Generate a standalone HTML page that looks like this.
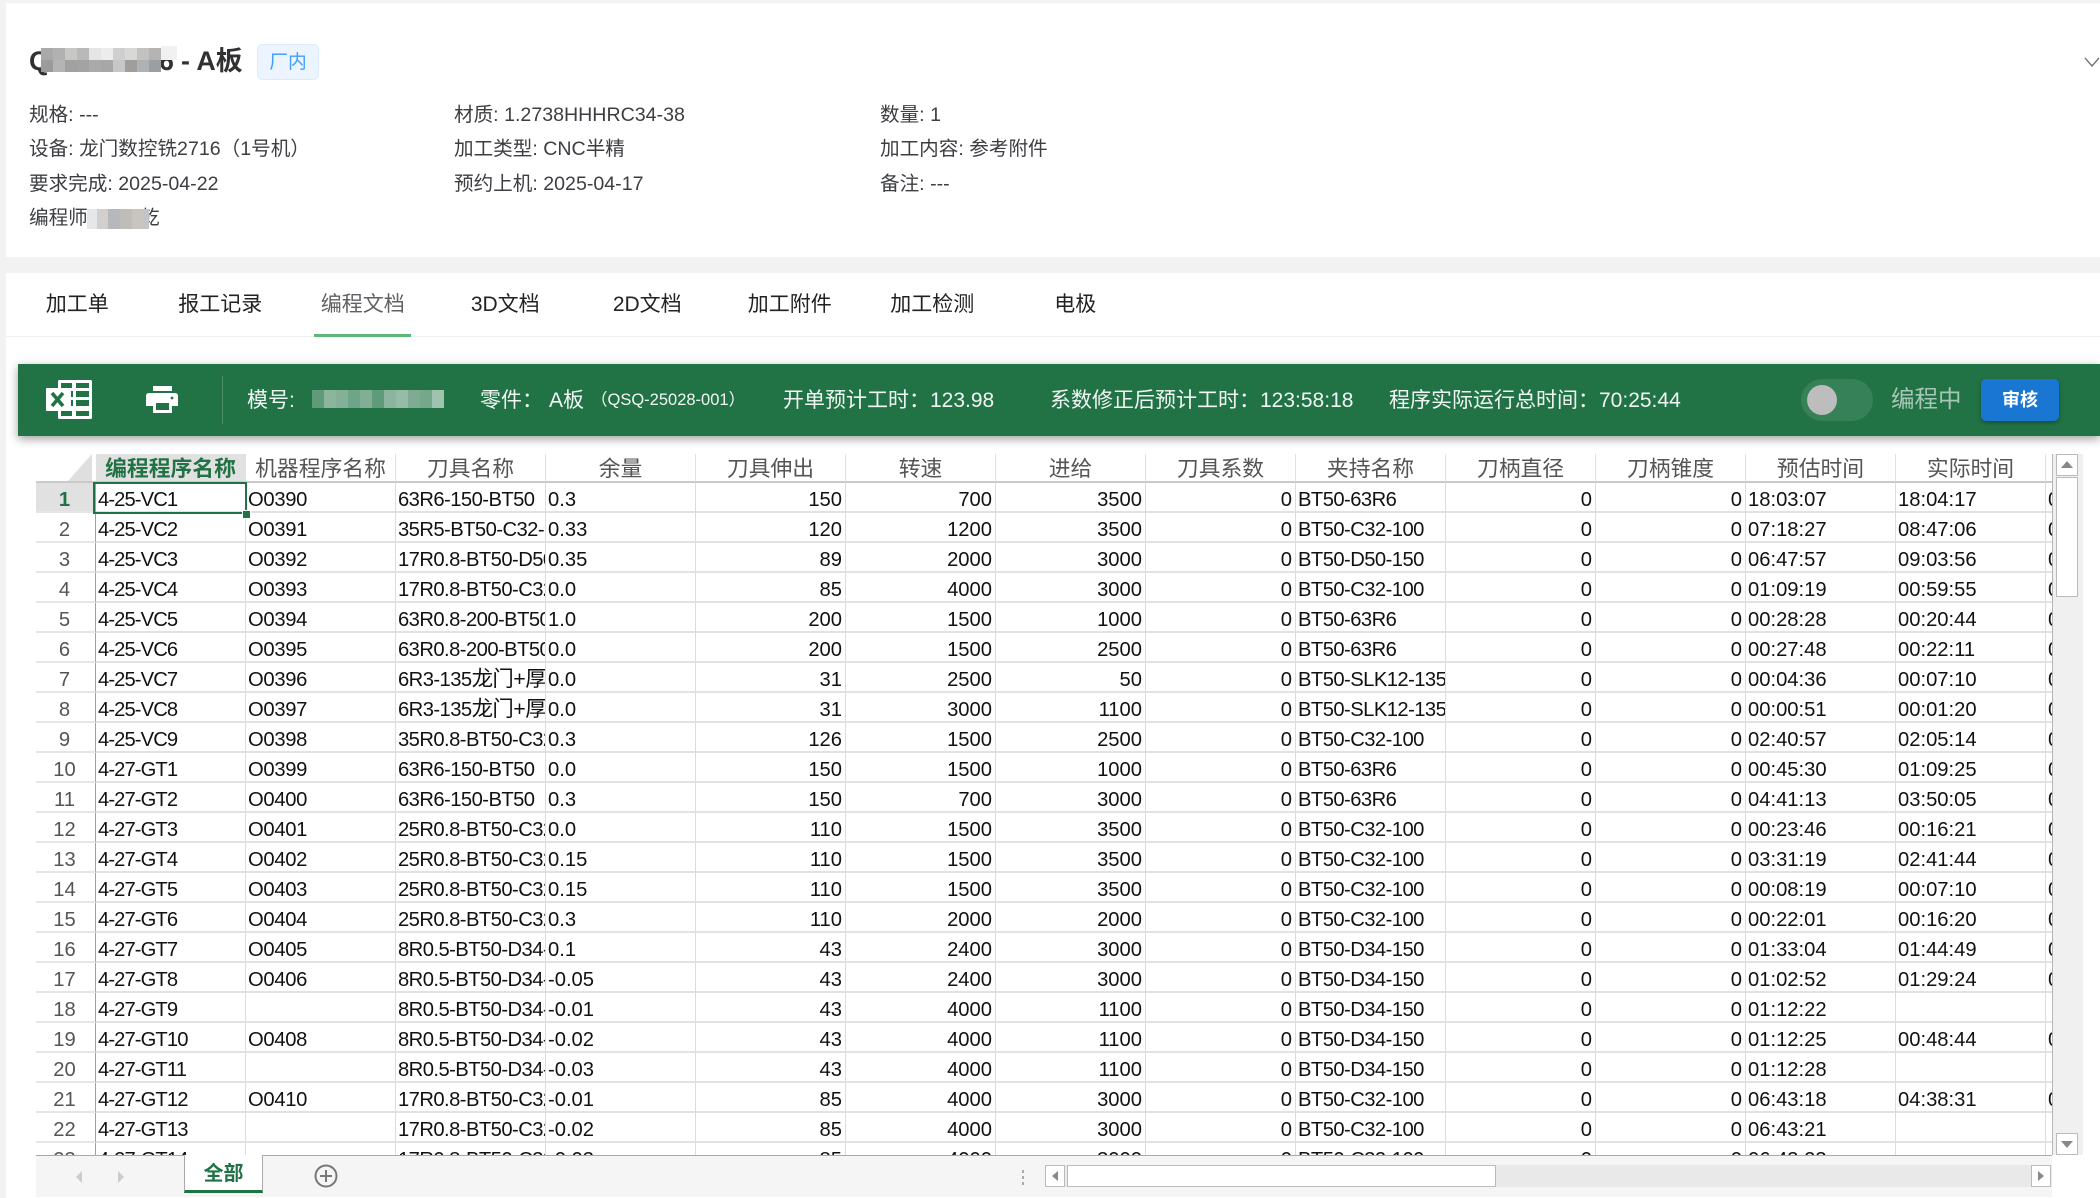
<!DOCTYPE html>
<html lang="zh-CN">
<head>
<meta charset="utf-8">
<title>编程文档</title>
<style>
*{box-sizing:border-box}
html,body{margin:0;padding:0;width:2100px;height:1198px;overflow:hidden;background:#f2f2f2;font-family:"Liberation Sans","Noto Sans CJK SC",sans-serif;color:#303133}
.a{position:absolute;white-space:nowrap;line-height:1}
.card{position:absolute;background:#fff}
.i{font-size:19.6px;color:#3c3e42}
.tab{position:absolute;top:294px;width:142.5px;text-align:center;font-size:21px;line-height:22px;color:#222}
.g{color:#f2f6f4;font-size:21px}
.tiles{position:absolute;display:flex;flex-wrap:wrap}
.tiles i{display:block;width:12px;height:12px}
#grid{position:absolute;left:36px;top:454px;width:2016px;height:701px;overflow:hidden;background:#fff}
table{border-collapse:separate;border-spacing:0;table-layout:fixed;width:2160px;font-size:20.2px;color:#111}
col{width:150px}
col.r{width:60px}
td,th{height:30px;padding:7px 3px 0 2px;line-height:21px;white-space:nowrap;overflow:hidden;border-right:1px solid #dcdcdc;border-bottom:2px solid #e2e2e2;font-weight:400;text-align:left}
th{height:29px;padding:2px 0 0;line-height:25px;text-align:center;font-size:21.8px;color:#555;border-right:1px solid #dde3de;border-bottom:2px solid #c9c9c9}
th.on{background:#e1e1e1;color:#217346;font-weight:700}
td.h{text-align:center;color:#555;padding:7px 2px 0 0;border-right:1px solid #a0a0a0;border-bottom:2px solid #e6e6e6}
td.h.on{background:#e1e1e1;color:#217346;font-weight:700}
td.n{text-align:right}
td.t1{letter-spacing:-.9px}
td.t2{letter-spacing:-.3px}
td.t3,td.t9{letter-spacing:-.55px}
td b{font-weight:400;font-size:21.4px;line-height:0}
#sheet{position:absolute;left:36px;top:1155px;width:2016px;height:42px;background:#f5f5f5;border-top:1.5px solid #aaa}
.sb{position:absolute;background:#fff;border:1px solid #bbb}
</style>
</head>
<body>

<!-- top strip and cards -->
<div class="card" style="left:6px;top:3px;width:2094px;height:254px"></div>
<div class="card" style="left:6px;top:273px;width:2094px;height:925px"></div>

<!-- title -->
<div class="a" style="left:29px;top:48px;font-size:26.8px;font-weight:700">Q</div>
<div class="a" style="left:159px;top:48px;font-size:26.8px;font-weight:700">6</div>
<div class="a" style="left:161px;top:46px;width:16px;height:14px;background:#f1f1f1"></div>
<div class="tiles" style="left:41px;top:48px;width:120px">
<i style="background:#a9a9a9"></i><i style="background:#b1b1af"></i><i style="background:#c8c8c6"></i><i style="background:#b9b9b9"></i><i style="background:#e4e5e6"></i><i style="background:#ececec"></i><i style="background:#cfcfcf"></i><i style="background:#d8d8d6"></i><i style="background:#c2c2c0"></i><i style="background:#b6b4b2"></i>
<i style="background:#9b9b9b"></i><i style="background:#b4b4b4"></i><i style="background:#a1a1a1"></i><i style="background:#a3a3a3"></i><i style="background:#a8aaae"></i><i style="background:#a7a7a7"></i><i style="background:#c6c8c8"></i><i style="background:#a09e9c"></i><i style="background:#aeb2b4"></i><i style="background:#9c9ea0"></i>
</div>
<div class="a" style="left:181px;top:48px;font-size:26.8px;font-weight:700">- A板</div>
<div class="a" style="left:257px;top:44px;width:62px;height:36px;line-height:34px;text-align:center;background:#ecf5ff;border:1px solid #d9ecff;border-radius:5px;color:#409eff;font-size:18.75px">厂内</div>

<!-- chevron -->
<svg class="a" style="left:2084px;top:56px" width="16" height="12" viewBox="0 0 16 12"><path d="M1 2 L8 10 L15 2" fill="none" stroke="#777" stroke-width="1.4"/></svg>

<!-- info -->
<div class="a i" style="left:29px;top:106px">规格: ---</div>
<div class="a i" style="left:454px;top:106px">材质: 1.2738HHHRC34-38</div>
<div class="a i" style="left:880px;top:106px">数量: 1</div>
<div class="a i" style="left:29px;top:140px">设备: 龙门数控铣2716（1号机）</div>
<div class="a i" style="left:454px;top:140px">加工类型: CNC半精</div>
<div class="a i" style="left:880px;top:140px">加工内容: 参考附件</div>
<div class="a i" style="left:29px;top:175px">要求完成: 2025-04-22</div>
<div class="a i" style="left:454px;top:175px">预约上机: 2025-04-17</div>
<div class="a i" style="left:880px;top:175px">备注: ---</div>
<div class="a i" style="left:29px;top:209px">编程师</div>
<div class="a i" style="left:140px;top:209px">乾</div>
<div class="tiles" style="left:87px;top:209px;width:62px;height:20px;display:flex">
<i style="width:10px;height:20px;background:#e6e7ea"></i><i style="width:11px;height:20px;background:#d2cfcc"></i><i style="width:12px;height:20px;background:#b6b8bc"></i><i style="width:12px;height:20px;background:#c0bdb9"></i><i style="width:12px;height:20px;background:#c8c4bf"></i><i style="width:5px;height:20px;background:#c2c4c8"></i>
</div>

<!-- tabs -->
<div class="tab" style="left:6px">加工单</div>
<div class="tab" style="left:149px">报工记录</div>
<div class="tab" style="left:291.5px;color:#606266">编程文档</div>
<div class="tab" style="left:434px">3D文档</div>
<div class="tab" style="left:576px">2D文档</div>
<div class="tab" style="left:718.5px">加工附件</div>
<div class="tab" style="left:861px">加工检测</div>
<div class="tab" style="left:1004px">电极</div>
<div class="a" style="left:6px;top:336px;width:2094px;height:1px;background:#f0f0f0"></div>
<div class="a" style="left:314px;top:334px;width:97px;height:3px;background:#5cb87a"></div>

<!-- green bar -->
<div class="a" style="left:18px;top:364px;width:2082px;height:72px;background:#217346;box-shadow:0 3px 9px rgba(0,0,0,.38)"></div>
<svg class="a" style="left:46px;top:380px" width="46" height="39" viewBox="0 0 46 39">
<rect x="12" y="0" width="34" height="39" rx="1.5" fill="#fff"/>
<g fill="#217346">
<rect x="15" y="3" width="11" height="5"/><rect x="30" y="3" width="13" height="5"/>
<rect x="30" y="11" width="13" height="6"/>
<rect x="30" y="20" width="13" height="6"/>
<rect x="15" y="31" width="11" height="5"/><rect x="30" y="31" width="13" height="5"/>
<rect x="25" y="11" width="2" height="6"/><rect x="25" y="20" width="2" height="6"/>
</g>
<rect x="0" y="8" width="24" height="23" rx="1" fill="#fff"/>
<path d="M6 13 L17 26 M17 13 L6 26" stroke="#217346" stroke-width="3.6" fill="none"/>
</svg>
<svg class="a" style="left:146px;top:386px" width="32" height="27" viewBox="0 0 32 27">
<rect x="7" y="0" width="19" height="5" fill="#fff"/>
<path d="M3 7 H29 Q32 7 32 10 V20 H0 V10 Q0 7 3 7 Z" fill="#fff"/>
<circle cx="26" cy="12" r="1.4" fill="#217346"/>
<rect x="7" y="14" width="19" height="13" fill="#fff"/>
<rect x="10" y="17" width="13" height="7" fill="#217346"/>
</svg>
<div class="a" style="left:222px;top:376px;width:1px;height:48px;background:rgba(255,255,255,.2)"></div>
<div class="a g" style="left:247px;top:390px">模号:</div>
<div class="tiles" style="left:312px;top:390px;width:132px;height:18px">
<i style="height:18px;background:#5f9a79"></i><i style="height:18px;background:#8bb59d"></i><i style="height:18px;background:#84b098"></i><i style="height:18px;background:#6ea487"></i><i style="height:18px;background:#82ae96"></i><i style="height:18px;background:#5f9a79"></i><i style="height:18px;background:#8bb59d"></i><i style="height:18px;background:#96bca7"></i><i style="height:18px;background:#7eab92"></i><i style="height:18px;background:#75a78b"></i><i style="height:18px;background:#a0c3af"></i>
</div>
<div class="a g" style="left:480px;top:390px">零件：</div>
<div class="a g" style="left:549px;top:390px">A板</div>
<div class="a" style="left:591px;top:392px;font-size:16.5px;color:#f2f6f4">（QSQ-25028-001）</div>
<div class="a g" style="left:783px;top:390px">开单预计工时：123.98</div>
<div class="a g" style="left:1050px;top:390px">系数修正后预计工时：123:58:18</div>
<div class="a g" style="left:1389px;top:390px">程序实际运行总时间：70:25:44</div>
<div class="a" style="left:1801px;top:379px;width:72px;height:42px;border-radius:21px;background:rgba(255,255,255,.1)"></div>
<div class="a" style="left:1807px;top:385px;width:30px;height:30px;border-radius:50%;background:#bdbdbd"></div>
<div class="a" style="left:1891px;top:388px;font-size:23.5px;color:rgba(255,255,255,.6)">编程中</div>
<div class="a" style="left:1981px;top:379px;width:78px;height:42px;line-height:42px;text-align:center;border-radius:5px;background:#1976d2;color:#fff;font-size:18px;font-weight:700;box-shadow:0 2px 4px rgba(0,0,0,.3)">审核</div>

<!-- grid -->
<div id="grid">
<table>
<colgroup><col class="r"><col><col><col><col><col><col><col><col><col><col><col><col><col><col></colgroup>
<tr><th style="border-right:0"></th><th class="on">编程程序名称</th><th>机器程序名称</th><th>刀具名称</th><th>余量</th><th>刀具伸出</th><th>转速</th><th>进给</th><th>刀具系数</th><th>夹持名称</th><th>刀柄直径</th><th>刀柄锥度</th><th>预估时间</th><th>实际时间</th><th></th></tr>
<tr><td class="h on">1</td><td class="t1">4-25-VC1</td><td class="t2">O0390</td><td class="t3">63R6-150-BT50</td><td>0.3</td><td class="n">150</td><td class="n">700</td><td class="n">3500</td><td class="n">0</td><td class="t9">BT50-63R6</td><td class="n">0</td><td class="n">0</td><td>18:03:07</td><td>18:04:17</td><td>0</td></tr>
<tr><td class="h">2</td><td class="t1">4-25-VC2</td><td class="t2">O0391</td><td class="t3">35R5-BT50-C32-100</td><td>0.33</td><td class="n">120</td><td class="n">1200</td><td class="n">3500</td><td class="n">0</td><td class="t9">BT50-C32-100</td><td class="n">0</td><td class="n">0</td><td>07:18:27</td><td>08:47:06</td><td>0</td></tr>
<tr><td class="h">3</td><td class="t1">4-25-VC3</td><td class="t2">O0392</td><td class="t3">17R0.8-BT50-D50-150</td><td>0.35</td><td class="n">89</td><td class="n">2000</td><td class="n">3000</td><td class="n">0</td><td class="t9">BT50-D50-150</td><td class="n">0</td><td class="n">0</td><td>06:47:57</td><td>09:03:56</td><td>0</td></tr>
<tr><td class="h">4</td><td class="t1">4-25-VC4</td><td class="t2">O0393</td><td class="t3">17R0.8-BT50-C32-100</td><td>0.0</td><td class="n">85</td><td class="n">4000</td><td class="n">3000</td><td class="n">0</td><td class="t9">BT50-C32-100</td><td class="n">0</td><td class="n">0</td><td>01:09:19</td><td>00:59:55</td><td>0</td></tr>
<tr><td class="h">5</td><td class="t1">4-25-VC5</td><td class="t2">O0394</td><td class="t3">63R0.8-200-BT50</td><td>1.0</td><td class="n">200</td><td class="n">1500</td><td class="n">1000</td><td class="n">0</td><td class="t9">BT50-63R6</td><td class="n">0</td><td class="n">0</td><td>00:28:28</td><td>00:20:44</td><td>0</td></tr>
<tr><td class="h">6</td><td class="t1">4-25-VC6</td><td class="t2">O0395</td><td class="t3">63R0.8-200-BT50</td><td>0.0</td><td class="n">200</td><td class="n">1500</td><td class="n">2500</td><td class="n">0</td><td class="t9">BT50-63R6</td><td class="n">0</td><td class="n">0</td><td>00:27:48</td><td>00:22:11</td><td>0</td></tr>
<tr><td class="h">7</td><td class="t1">4-25-VC7</td><td class="t2">O0396</td><td class="t3">6R3-135<b>龙门+厚</b></td><td>0.0</td><td class="n">31</td><td class="n">2500</td><td class="n">50</td><td class="n">0</td><td class="t9">BT50-SLK12-135-1</td><td class="n">0</td><td class="n">0</td><td>00:04:36</td><td>00:07:10</td><td>0</td></tr>
<tr><td class="h">8</td><td class="t1">4-25-VC8</td><td class="t2">O0397</td><td class="t3">6R3-135<b>龙门+厚</b></td><td>0.0</td><td class="n">31</td><td class="n">3000</td><td class="n">1100</td><td class="n">0</td><td class="t9">BT50-SLK12-135-1</td><td class="n">0</td><td class="n">0</td><td>00:00:51</td><td>00:01:20</td><td>0</td></tr>
<tr><td class="h">9</td><td class="t1">4-25-VC9</td><td class="t2">O0398</td><td class="t3">35R0.8-BT50-C32-100</td><td>0.3</td><td class="n">126</td><td class="n">1500</td><td class="n">2500</td><td class="n">0</td><td class="t9">BT50-C32-100</td><td class="n">0</td><td class="n">0</td><td>02:40:57</td><td>02:05:14</td><td>0</td></tr>
<tr><td class="h">10</td><td class="t1">4-27-GT1</td><td class="t2">O0399</td><td class="t3">63R6-150-BT50</td><td>0.0</td><td class="n">150</td><td class="n">1500</td><td class="n">1000</td><td class="n">0</td><td class="t9">BT50-63R6</td><td class="n">0</td><td class="n">0</td><td>00:45:30</td><td>01:09:25</td><td>0</td></tr>
<tr><td class="h">11</td><td class="t1">4-27-GT2</td><td class="t2">O0400</td><td class="t3">63R6-150-BT50</td><td>0.3</td><td class="n">150</td><td class="n">700</td><td class="n">3000</td><td class="n">0</td><td class="t9">BT50-63R6</td><td class="n">0</td><td class="n">0</td><td>04:41:13</td><td>03:50:05</td><td>0</td></tr>
<tr><td class="h">12</td><td class="t1">4-27-GT3</td><td class="t2">O0401</td><td class="t3">25R0.8-BT50-C32-100</td><td>0.0</td><td class="n">110</td><td class="n">1500</td><td class="n">3500</td><td class="n">0</td><td class="t9">BT50-C32-100</td><td class="n">0</td><td class="n">0</td><td>00:23:46</td><td>00:16:21</td><td>0</td></tr>
<tr><td class="h">13</td><td class="t1">4-27-GT4</td><td class="t2">O0402</td><td class="t3">25R0.8-BT50-C32-100</td><td>0.15</td><td class="n">110</td><td class="n">1500</td><td class="n">3500</td><td class="n">0</td><td class="t9">BT50-C32-100</td><td class="n">0</td><td class="n">0</td><td>03:31:19</td><td>02:41:44</td><td>0</td></tr>
<tr><td class="h">14</td><td class="t1">4-27-GT5</td><td class="t2">O0403</td><td class="t3">25R0.8-BT50-C32-100</td><td>0.15</td><td class="n">110</td><td class="n">1500</td><td class="n">3500</td><td class="n">0</td><td class="t9">BT50-C32-100</td><td class="n">0</td><td class="n">0</td><td>00:08:19</td><td>00:07:10</td><td>0</td></tr>
<tr><td class="h">15</td><td class="t1">4-27-GT6</td><td class="t2">O0404</td><td class="t3">25R0.8-BT50-C32-100</td><td>0.3</td><td class="n">110</td><td class="n">2000</td><td class="n">2000</td><td class="n">0</td><td class="t9">BT50-C32-100</td><td class="n">0</td><td class="n">0</td><td>00:22:01</td><td>00:16:20</td><td>0</td></tr>
<tr><td class="h">16</td><td class="t1">4-27-GT7</td><td class="t2">O0405</td><td class="t3">8R0.5-BT50-D34-150</td><td>0.1</td><td class="n">43</td><td class="n">2400</td><td class="n">3000</td><td class="n">0</td><td class="t9">BT50-D34-150</td><td class="n">0</td><td class="n">0</td><td>01:33:04</td><td>01:44:49</td><td>0</td></tr>
<tr><td class="h">17</td><td class="t1">4-27-GT8</td><td class="t2">O0406</td><td class="t3">8R0.5-BT50-D34-150</td><td>-0.05</td><td class="n">43</td><td class="n">2400</td><td class="n">3000</td><td class="n">0</td><td class="t9">BT50-D34-150</td><td class="n">0</td><td class="n">0</td><td>01:02:52</td><td>01:29:24</td><td>0</td></tr>
<tr><td class="h">18</td><td class="t1">4-27-GT9</td><td></td><td class="t3">8R0.5-BT50-D34-150</td><td>-0.01</td><td class="n">43</td><td class="n">4000</td><td class="n">1100</td><td class="n">0</td><td class="t9">BT50-D34-150</td><td class="n">0</td><td class="n">0</td><td>01:12:22</td><td></td><td></td></tr>
<tr><td class="h">19</td><td class="t1">4-27-GT10</td><td class="t2">O0408</td><td class="t3">8R0.5-BT50-D34-150</td><td>-0.02</td><td class="n">43</td><td class="n">4000</td><td class="n">1100</td><td class="n">0</td><td class="t9">BT50-D34-150</td><td class="n">0</td><td class="n">0</td><td>01:12:25</td><td>00:48:44</td><td>0</td></tr>
<tr><td class="h">20</td><td class="t1">4-27-GT11</td><td></td><td class="t3">8R0.5-BT50-D34-150</td><td>-0.03</td><td class="n">43</td><td class="n">4000</td><td class="n">1100</td><td class="n">0</td><td class="t9">BT50-D34-150</td><td class="n">0</td><td class="n">0</td><td>01:12:28</td><td></td><td></td></tr>
<tr><td class="h">21</td><td class="t1">4-27-GT12</td><td class="t2">O0410</td><td class="t3">17R0.8-BT50-C32-100</td><td>-0.01</td><td class="n">85</td><td class="n">4000</td><td class="n">3000</td><td class="n">0</td><td class="t9">BT50-C32-100</td><td class="n">0</td><td class="n">0</td><td>06:43:18</td><td>04:38:31</td><td>0</td></tr>
<tr><td class="h">22</td><td class="t1">4-27-GT13</td><td></td><td class="t3">17R0.8-BT50-C32-100</td><td>-0.02</td><td class="n">85</td><td class="n">4000</td><td class="n">3000</td><td class="n">0</td><td class="t9">BT50-C32-100</td><td class="n">0</td><td class="n">0</td><td>06:43:21</td><td></td><td></td></tr>
<tr><td class="h">23</td><td class="t1">4-27-GT14</td><td></td><td class="t3">17R0.8-BT50-C32-100</td><td>-0.03</td><td class="n">85</td><td class="n">4000</td><td class="n">3000</td><td class="n">0</td><td class="t9">BT50-C32-100</td><td class="n">0</td><td class="n">0</td><td>06:43:23</td><td></td><td></td></tr>
</table>
<svg style="position:absolute;left:32px;top:0" width="24" height="27" viewBox="0 0 24 27"><path d="M24 0 V27 H0 Z" fill="#dfdfdf"/></svg>
<div style="position:absolute;left:57px;top:28px;width:154px;height:32px;border:2.5px solid #217346"></div>
<div style="position:absolute;left:207px;top:57px;width:7px;height:7px;background:#217346;outline:1px solid #fff"></div>
</div>

<!-- vertical scrollbar -->
<div class="a" style="left:2052px;top:454px;width:31px;height:701px;background:#f0f0f0;border-left:1px solid #b5b5b5"></div>
<div class="sb" style="left:2056px;top:454px;width:22px;height:22px"></div>
<svg class="a" style="left:2061px;top:461px" width="12" height="7"><path d="M6 0 L12 7 H0 Z" fill="#888"/></svg>
<div class="sb" style="left:2056px;top:477px;width:22px;height:120px"></div>
<div class="sb" style="left:2056px;top:1133px;width:22px;height:22px"></div>
<svg class="a" style="left:2061px;top:1141px" width="12" height="7"><path d="M0 0 H12 L6 7 Z" fill="#888"/></svg>

<!-- sheet bar -->
<div id="sheet"></div>
<div class="a" style="left:184px;top:1155px;width:79px;height:38px;background:#fff;border:1px solid #aaa;border-top:0;border-bottom:3px solid #217346;text-align:center;line-height:38px;color:#217346;font-weight:700;font-size:20px">全部</div>
<svg class="a" style="left:74px;top:1170px" width="50" height="14"><path d="M8 1 L2 7 L8 13 Z M44 1 L50 7 L44 13 Z" fill="#ccc"/></svg>
<svg class="a" style="left:314px;top:1164px" width="24" height="24"><circle cx="12" cy="12" r="10.5" fill="none" stroke="#777" stroke-width="2"/><path d="M12 6 V18 M6 12 H18" stroke="#777" stroke-width="2"/></svg>
<div class="a" style="left:1022px;top:1170px;width:2px;height:3px;background:#aaa;box-shadow:0 6px 0 #aaa,0 12px 0 #aaa"></div>
<div class="a" style="left:1045px;top:1165px;width:1007px;height:22px;background:#e9e9e9"></div>
<div class="sb" style="left:1045px;top:1165px;width:20px;height:22px"></div>
<svg class="a" style="left:1052px;top:1171px" width="6" height="10"><path d="M6 0 V10 L0 5 Z" fill="#888"/></svg>
<div class="sb" style="left:1067px;top:1165px;width:429px;height:22px"></div>
<div class="sb" style="left:2031px;top:1165px;width:20px;height:22px"></div>
<svg class="a" style="left:2038px;top:1171px" width="6" height="10"><path d="M0 0 V10 L6 5 Z" fill="#888"/></svg>

</body>
</html>
